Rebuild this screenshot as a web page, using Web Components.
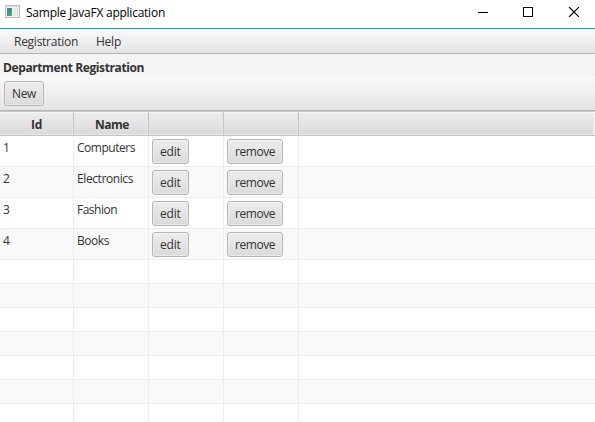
<!DOCTYPE html>
<html lang="en">
<head>
<meta charset="utf-8">
<title>Sample JavaFX application</title>
<style>
html,body{margin:0;height:100%;overflow:hidden;background:#fff}
body{font:12px/16px "Open Sans","Noto Sans",sans-serif;color:#333}
</style>
</head>
<body>
<app-window></app-window>
<script>
const define = (name, html, setup) => customElements.define(name, class extends HTMLElement {
  connectedCallback() {
    if (this.shadowRoot) return;
    const t = document.createElement('template');
    t.innerHTML = html;
    this.attachShadow({mode: 'open'}).append(t.content.cloneNode(true));
    if (setup) setup(this, this.shadowRoot);
  }
});

/* Text run whose tracking is adjusted to an advance width in pixels. */
define('ui-text', `<style>:host{display:inline-block;white-space:nowrap;text-align:left;height:16px;line-height:16px;vertical-align:top}span{display:inline-block}</style><span></span>`, (el, root) => {
  const s = root.querySelector('span'), w = +el.getAttribute('w');
  s.textContent = el.getAttribute('text');
  s.style.letterSpacing = ((w - s.getBoundingClientRect().width) / s.textContent.length) + 'px';
  el.style.width = w + 'px';
});

define('title-bar', `<style>
:host{display:flex;height:28px;background:#fff;color:#000;border-bottom:1px solid #129bd2;align-items:flex-start}
.app{margin:5px 6px 0 5px}.name{margin-top:5px;flex:0 0 139px}.ctl{display:flex;margin:7px 16px 0 auto;gap:34px}
svg{display:block}
</style>
<svg class="app" width="15" height="14" shape-rendering="crispEdges">
<defs><linearGradient id="g" x2=".6" y2="1"><stop stop-color="#4a76a8"/><stop offset=".55" stop-color="#3f8f86"/><stop offset="1" stop-color="#55a878"/></linearGradient></defs>
<rect width="15" height="13" fill="#b9bcc0"/><rect x="1" y="1" width="13" height="1" fill="#dcdee0"/><rect x="1" y="2" width="13" height="10" fill="#f2f3f3"/>
<rect x="2" y="3" width="5" height="8" fill="url(#g)"/><rect x="8" y="3" width="3" height="8" fill="#e6e8e8"/><rect x="12" y="3" width="1" height="8" fill="#c9d8c9"/></svg>
<ui-text class="name" w="139" text="Sample JavaFX application"></ui-text>
<div class="ctl">
<svg width="11" height="10" shape-rendering="crispEdges"><path d="M0 5.5h10" stroke="#000"/></svg>
<svg width="11" height="10" shape-rendering="crispEdges"><rect x=".5" y=".5" width="9" height="9" fill="none" stroke="#000"/></svg>
<svg width="11" height="10"><path d="M1 0l10 10M11 0l-10 10" stroke="#000" stroke-width="1.1"/></svg>
</div>`);

define('menu-bar', `<style>:host{display:flex;height:25px;padding:5px 14px 0;gap:18px;box-sizing:border-box;background:linear-gradient(#fbfbfb,#e3e3e3);border-bottom:1px solid #b4b4b4}</style>
<ui-text w="64" text="Registration"></ui-text><ui-text w="25" text="Help"></ui-text>`);

define('fx-button', `<style>:host{display:inline-block;box-sizing:border-box;height:25px;padding:4px 7px;border:1px solid #b5b5b5;border-radius:3px;
background:linear-gradient(#ededed,#dadada);box-shadow:inset 0 1px #f4f4f4,inset 0 0 0 1px #e9e9e9;color:#333;line-height:16px;vertical-align:top}</style><slot></slot>`);

define('page-head', `<style>:host{display:block;height:56px;background:#f4f4f4}
.h{height:22px;padding:6px 3px 0;box-sizing:border-box;font-weight:bold}
.bar{height:34px;padding:5px 4px 0;box-sizing:border-box;background:linear-gradient(#f9f9f9,#e4e4e4)}
</style><div class="h"><ui-text w="141" text="Department Registration"></ui-text></div>
<div class="bar"><fx-button><ui-text w="24" text="New"></ui-text></fx-button></div>`);

define('table-head', `<style>:host{display:grid;grid-template-columns:74px 75px 75px 75px 1fr;height:26px;box-sizing:border-box;border-top:1px solid #b3b3b3;border-bottom:1px solid #c4c4c4;
font-weight:bold;text-align:center;background:#c4c4c4}
div{box-sizing:border-box;padding-top:5px;background:linear-gradient(#eee,#d9d9d9);border-right:1px solid #c4c4c4;border-top:1px solid #c8c8c8;box-shadow:inset 0 1px #f6f6f6,inset -1px -1px #e7e7e7}
div+div{padding-left:2px}
div:last-child{border-right-color:#f4f4f4}
</style><div><ui-text w="11" text="Id"></ui-text></div><div><ui-text w="34" text="Name"></ui-text></div><div></div><div></div><div></div>`);

define('table-row', `<style>:host{display:grid;grid-template-columns:74px 75px 75px 75px 1fr;height:24px;box-sizing:border-box;border-bottom:1px solid #ededed;background:#fff}
:host([filled]){height:31px}:host(:nth-child(odd)){background:#f9f9f9}
div{border-right:1px solid #ededed;padding:4px 0 0 3px;min-width:0}
div:first-child{padding-left:1px}div:last-child{border:0}div.b{padding-top:3px}
</style><div class="id"></div><div class="name"></div><div class="b e"></div><div class="b r"></div><div></div>`, (el, root) => {
  if (!el.hasAttribute('filled')) return;
  const [id, name, w] = el.getAttribute('filled').split(',');
  root.querySelector('.id').innerHTML = `<ui-text w="7" text="${id}"></ui-text>`;
  root.querySelector('.name').innerHTML = `<ui-text w="${w}" text="${name}"></ui-text>`;
  root.querySelector('.e').innerHTML = '<fx-button><ui-text w="20.5" text="edit"></ui-text></fx-button>';
  root.querySelector('.r').innerHTML = '<fx-button><ui-text w="40" text="remove"></ui-text></fx-button>';
});

define('data-table', `<style>:host{display:block}</style><div><table-head></table-head>
<table-row filled="1,Computers,58"></table-row><table-row filled="2,Electronics,56"></table-row>
<table-row filled="3,Fashion,40"></table-row><table-row filled="4,Books,32"></table-row>
<table-row></table-row><table-row></table-row><table-row></table-row><table-row></table-row><table-row></table-row><table-row></table-row><table-row></table-row></div>`);

define('app-window', `<style>:host{display:flex;flex-direction:column;height:100vh;overflow:hidden}title-bar,menu-bar,page-head,data-table{flex:none}</style>
<title-bar></title-bar><menu-bar></menu-bar><page-head></page-head><data-table></data-table>`);
</script>
</body>
</html>
